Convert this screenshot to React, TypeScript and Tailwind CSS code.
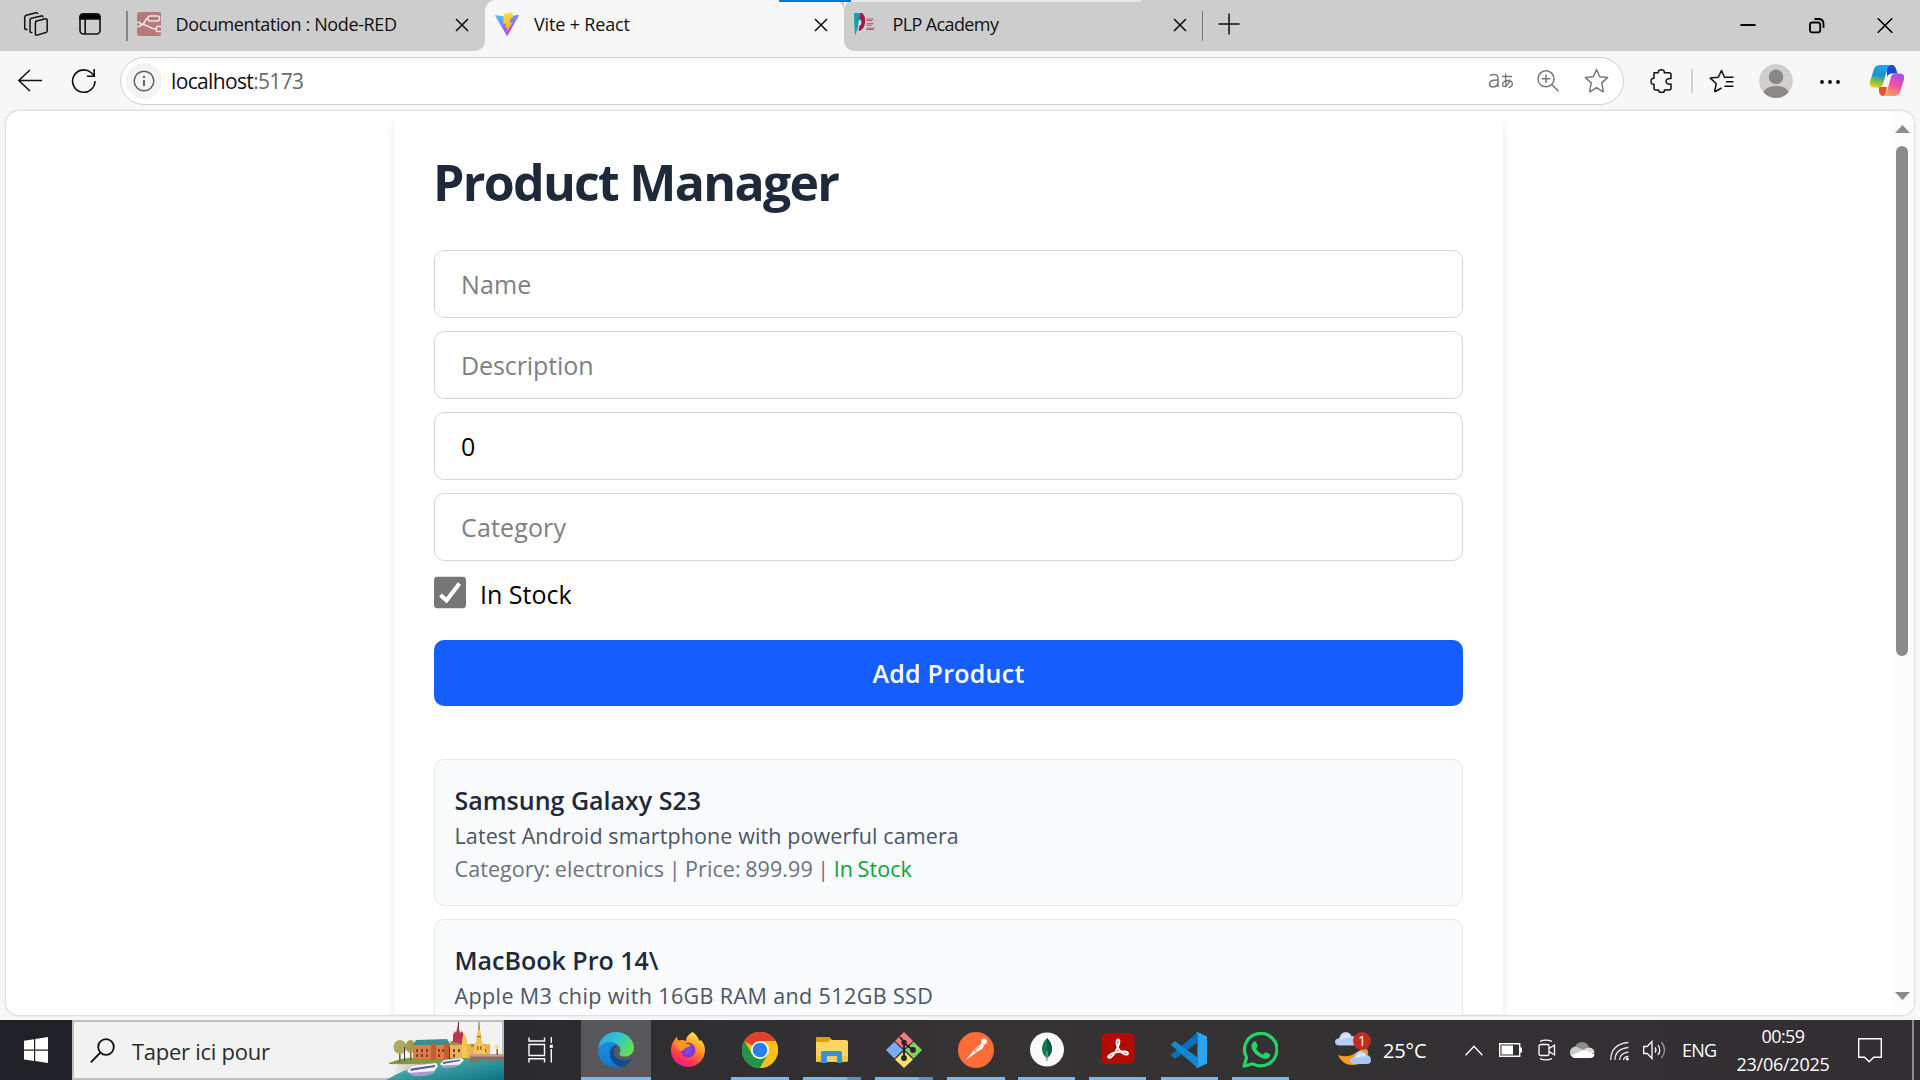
import type { ReactNode } from "react";

const products = [
  {
    name: "Samsung Galaxy S23",
    description: "Latest Android smartphone with powerful camera",
    category: "electronics",
    price: "899.99",
    tracking: "tracking-[0.005em]",
  },
  {
    name: "MacBook Pro 14\\",
    description: "Apple M3 chip with 16GB RAM and 512GB SSD",
    tracking: "tracking-[0.018em]",
  },
];

/* ---------- browser chrome ---------- */

function CloseX({ className = "" }: { className?: string }) {
  return (
    <svg viewBox="0 0 14 14" className={`h-[14px] w-[14px] shrink-0 ${className}`} fill="none" stroke="#111" strokeWidth="1.6">
      <path d="M1 1l12 12M13 1L1 13" />
    </svg>
  );
}

function TabBar() {
  return (
    <div className="relative flex h-[51px] shrink-0 bg-[#cdcdcd] text-[18px] text-[#111]">
      <div className="flex w-[485px] items-center bg-[#f7f7f7]">
        <div className="flex h-full w-full items-center rounded-br-[10px] bg-[#cdcdcd] pb-[3px]">
          <svg viewBox="0 0 26 26" className="ml-[23px] h-[26px] w-[26px]" fill="none" stroke="#111" strokeWidth="1.5" strokeLinejoin="round" strokeLinecap="round">
            <path d="M12.6 10.2 22.6 7.8q1.6-.3 1.6 1.4v10.5q0 1.4-1.4 1.8l-8.6 2.6q-1.8.5-1.8-1.4V12q0-1.5 1.4-1.8z" />
            <path d="M8.8 21.4q-1.8.3-1.8-1.4V9.2q0-1.5 1.5-1.9l9.8-2.4q1.3-.2 1.6.8" />
            <path d="M4 18.6q-2.3 0-2.3-1.9V6.2q0-1.6 1.6-2L13 1.7q1.2-.2 1.7.8" />
          </svg>
          <svg viewBox="0 0 22 22" className="ml-[30px] h-[22px] w-[22px]" fill="none" stroke="#111" strokeWidth="1.6">
            <rect x="1" y="1" width="20" height="20" rx="3.5" />
            <path d="M1 6V4q0-3 3-3h14q3 0 3 3v2z" fill="#000" />
            <path d="M6.2 6v15" />
          </svg>
          <div className="ml-[25px] h-[30px] w-[1.5px] translate-y-[2px] bg-[#858585]" />
          <svg viewBox="0 0 24 24" className="ml-[9.5px] h-6 w-6" fill="none" stroke="#f3e4e4" strokeWidth="1.5">
            <rect width="24" height="24" rx="2" fill="#b67a7a" stroke="none" />
            <rect x="11" y="4" width="11.5" height="5" rx="2" />
            <path d="M0 10.5h2.500q1 0 1 1v2q0 1-1 1H0M4 12.500c5 0 3-6 7-6M4 12.500c8 0 8 4.500 15 4.500M24 14.500h-3.500q-1.200 0-1.200 1v3q0 1 1.200 1H24" />
          </svg>
          <span className="ml-[14.500px] w-[275px] -translate-y-[0.500px] tracking-[-0.021em]">Documentation : Node-RED</span>
          <CloseX className="ml-[4.500px] translate-y-[1px]" />
        </div>
      </div>
      <div className="w-[359px] bg-[#cdcdcd]">
        <div className="flex h-full items-center rounded-t-[11px] bg-[#f7f7f7] pb-[3px]">
          <svg viewBox="0 0 24 24" className="ml-[10px] h-6 w-6">
            <defs>
              <linearGradient id="viteA" x1="0" y1="0" x2=".6" y2="1">
                <stop offset="0" stopColor="#41d1ff" />
                <stop offset="1" stopColor="#bd34fe" />
              </linearGradient>
              <linearGradient id="viteB" x1=".3" y1="0" x2=".5" y2="1">
                <stop offset="0" stopColor="#ffe04b" />
                <stop offset="1" stopColor="#ffa800" />
              </linearGradient>
            </defs>
            <path d="M.3 3 12 5l11.700-2.200q.5 0 .2.600L12.500 23.600q-.4.500-.8 0L0 3.500Q0 3 .3 3z" fill="url(#viteA)" />
            <path d="m17.300.3-8.500 1.500-.6 10.200 3-.7-1 4.600 2.300-.6-1.200 6 6-11-3 .6 1.800-5.300 2-.4z" fill="url(#viteB)" />
          </svg>
          <span className="ml-[15px] w-[273px] -translate-y-[0.500px] tracking-[-0.009em]">Vite + React</span>
          <CloseX className="ml-[7px] translate-y-[1px]" />
        </div>
      </div>
      <div className="flex-1 bg-[#f7f7f7]">
        <div className="flex h-full items-center rounded-l-[10px] bg-[#cdcdcd] pb-[3px]">
          <svg viewBox="0 0 22 24" className="ml-[10px] h-6 w-[22px]">
            <path d="M0 1h9L6 6l2 5-3 1-3.800 11.500L.3 13z" fill="#12a0a5" />
            <path d="M7 1c6 1 6 17-2.500 18l1-5c3-2 3-6-.5-8z" fill="#a5164f" />
            <path d="M5 8q3 0 1.500 4L4 14z" fill="#e8e8e8" />
            <path d="M12.500 7h7M12.500 8.600h6M12.500 11.700h7M12.500 13.300h5M12.500 16.200h8M12.500 17.600h7" stroke="#b8386b" strokeWidth=".9" />
          </svg>
          <span className="ml-[16.500px] w-[273.500px] -translate-y-[0.500px] tracking-[-0.034em]">PLP Academy</span>
          <CloseX className="ml-[6.500px] translate-y-[1px]" />
          <div className="ml-[15px] h-[30px] w-[1.5px] translate-y-[2px] bg-[#777]" />
          <svg viewBox="0 0 22 22" className="ml-[15px] h-[22px] w-[22px]" stroke="#111" strokeWidth="1.5">
            <path d="M11 .5v21M.5 11h21" />
          </svg>
          <div className="ml-auto flex translate-y-[1.500px] items-center">
            <svg viewBox="0 0 16 16" className="h-4 w-4" stroke="#000" strokeWidth="2">
              <path d="M.5 7.500h15" />
            </svg>
            <svg viewBox="0 0 16 16" className="ml-[53px] h-4 w-4" fill="none" stroke="#000" strokeWidth="1.800">
              <rect x="1" y="5" width="10.200" height="10" rx="2.200" />
              <path d="M5.500 1.500h4q5 0 5 5v4" />
            </svg>
            <svg viewBox="0 0 16 16" className="mr-[27px] ml-[52px] h-4 w-4" stroke="#000" strokeWidth="1.600">
              <path d="M.7.7l14.600 14.600M15.300.7.7 15.300" />
            </svg>
          </div>
        </div>
      </div>
      <div className="absolute top-0 left-[779px] flex h-[2px]">
        <div className="h-[2px] w-[72px] shrink-0 bg-[#0078d7]" />
        <div className="h-[2px] w-[290px] shrink-0 bg-[#e6e6e6]" />
      </div>
    </div>
  );
}

const STAR = "M12 1.400l3.100 7 7.600.8-5.700 5.100 1.600 7.900q.1.900-.7.500L12 18.900l-5.900 3.800q-.8.400-.7-.5L7 14.300 1.300 9.200l7.600-.8z";

function Toolbar() {
  return (
    <div className="flex h-[59px] shrink-0 items-center bg-[#f7f7f7]">
      <svg viewBox="0 0 26 24" className="ml-[17px] h-6 w-[26px] -translate-y-[0.500px]" fill="none" stroke="#111" strokeWidth="1.500">
        <path d="M13 1.500 1.800 12 13 22.500M1.800 12H25" />
      </svg>
      <svg viewBox="0 0 26 26" className="ml-[28px] h-[26px] w-[26px]" fill="none" stroke="#111" strokeWidth="1.600">
        <path d="M24 13A11.200 11.200 0 1 1 20 4.500l3 3M23.200 1v7.200H16" />
      </svg>
      <div className="ml-[23px] flex h-[48px] w-[1504px] items-center rounded-full border-[1.5px] border-[#d0d0d0] bg-white">
        <div className="ml-[5px] flex h-9 w-9 items-center justify-center rounded-full bg-[#f3f3f3]">
          <svg viewBox="0 0 22 22" className="h-[22px] w-[22px]" fill="none" stroke="#5f5f5f" strokeWidth="1.400">
            <circle cx="11" cy="11" r="9.800" />
            <path d="M11 10v6M11 6v2" strokeWidth="1.900" />
          </svg>
        </div>
        <span className="ml-[9px] translate-y-[1px] text-[21px] tracking-[-0.031em] text-[#111]">
          localhost<span className="text-[#6b6b6b]">:5173</span>
        </span>
        <svg viewBox="0 0 26 18" className="mr-[23px] ml-auto h-[18px] w-[26px]" fill="none" stroke="#777" strokeWidth="1.500">
          <path d="M2 3.800q1.500-1.300 4-1.300 4 0 4 4V15M10 8q-8.500-.4-8.500 4 0 3 3.200 3 4.300 0 5.300-4" />
          <path d="M14 4.500h10M17.800 1.500q-.6 9 .6 13.500M22 7.500q-2 6.500-5.500 7-2.500 0-1.800-2.800 1-3 5.300-3.200 4.700 0 4.300 3.800-.5 2.700-3.800 3.200" strokeWidth="1.300" />
        </svg>
        <svg viewBox="0 0 22 22" className="mr-[25px] h-[22px] w-[22px]" fill="none" stroke="#777" strokeWidth="1.500">
          <circle cx="9" cy="8.800" r="8" />
          <path d="M9 4.500v8.600M4.700 8.800h8.600M14.700 14.500l6.800 6.800" />
        </svg>
        <svg viewBox="0 0 24 24" className="mr-[14.500px] h-[25px] w-[25px]" fill="none" stroke="#777" strokeWidth="1.400" strokeLinejoin="round">
          <path d={STAR} />
        </svg>
      </div>
      <svg viewBox="0 0 23 24" className="ml-[26px] h-6 w-[23px]" fill="none" stroke="#111" strokeWidth="1.500" strokeLinejoin="round">
        <path d="M4 3.800h4.300q-.4-3 3-3t3 3H19q2 0 2 2v3.700q-5-.3-5 2.800t5 2.800v4q0 2-2 2h-4.600q.4 2.400-2.700 2.400T8.500 21H6q-2 0-2-2v-3.700q-3 .3-3-2.900T4 9.300z" />
      </svg>
      <div className="ml-[18px] h-6 w-[1.500px] bg-[#cfcfcf]" />
      <svg viewBox="0 0 25 24" className="ml-[16px] h-6 w-[25px]" fill="none" stroke="#111" strokeWidth="1.500" strokeLinejoin="round">
        <path d="M15.500 8.300 12.500 1.500 9.300 8.300l-8 .8 6 5.600L5.700 22q0 .8.700.5l6.100-3.500" />
        <path d="M15 8.300h9.500M17 12.800h7.500M15.500 17.300h9" />
      </svg>
      <svg viewBox="0 0 34 34" className="ml-[25px] h-[34px] w-[34px]">
        <defs>
          <clipPath id="avatar"><circle cx="17" cy="17" r="17" /></clipPath>
        </defs>
        <g clipPath="url(#avatar)">
          <circle cx="17" cy="17" r="17" fill="#d2d0ce" />
          <circle cx="17" cy="12.800" r="7.300" fill="#8a8886" />
          <path d="M4 29q3-7 13-7t13 7l-4 5H8z" fill="#8a8886" />
        </g>
      </svg>
      <svg viewBox="0 0 22 6" className="ml-[26.500px] h-[6px] w-[22px] translate-y-[1px]" fill="#000">
        <circle cx="3" cy="3" r="1.900" /><circle cx="11" cy="3" r="1.900" /><circle cx="19" cy="3" r="1.900" />
      </svg>
      <svg viewBox="0 0 34 31" className="ml-[28.500px] h-[31px] w-[34px]">
        <defs>
          <linearGradient id="cpA" x1=".5" y1="0" x2=".3" y2="1">
            <stop offset="0" stopColor="#1aa7ee" /><stop offset=".45" stopColor="#218fd0" /><stop offset=".7" stopColor="#6fbd55" /><stop offset="1" stopColor="#f2cf12" />
          </linearGradient>
          <linearGradient id="cpB" x1=".7" y1="0" x2=".3" y2="1">
            <stop offset="0" stopColor="#a44df0" /><stop offset=".5" stopColor="#f0549b" /><stop offset="1" stopColor="#ffa25a" />
          </linearGradient>
        </defs>
        <path d="M17 0h5q3 0 4 4l1.500 4.500H22q-4 0-5 3.500z" fill="#1b49cf" />
        <path d="M9 22h8l-1 5q-1 4-2.500 4Q10 31 9 27z" fill="#ee5130" />
        <path d="M10 0h11q-3 1-4 5l-4 14q-1 3.500-5 3.500H4q-5 0-4-6L4 4q1.500-4 6-4z" fill="url(#cpA)" />
        <path d="M24 31H13q3-1 4-5l4-14q1-3.500 5-3.500h4q5 0 4 6L30 27q-1.500 4-6 4z" fill="url(#cpB)" />
      </svg>
    </div>
  );
}

/* ---------- page ---------- */

const field =
  "block h-[68px] w-full rounded-[10px] border border-[#d1d5dc] bg-white pr-[27px] pl-[26px] text-[25px] text-black placeholder:text-[#808080] placeholder:opacity-100 outline-none";

function Page() {
  return (
    <div className="mx-[6px] flex h-[904px] shrink-0 overflow-hidden rounded-[13px] bg-white shadow-[0_0_2px_1px_rgba(0,0,0,0.13)]">
      <div className="flex flex-1 justify-center">
        <main className="h-[903px] w-[1109px] shrink-0 rounded-t-[14px] bg-white px-[40px] pt-[41px] shadow-[0_5px_9px_1px_rgba(0,0,0,0.08)]">
          <h1 className="mb-[38px] h-[60px] text-[50px] leading-[60px] font-bold tracking-[-0.034em] whitespace-nowrap text-[#1e2939]">
            <span className="-ml-[1px]">Product Manager</span>
          </h1>
          <form>
            <div className="flex flex-col gap-[13px]">
              <input className={`${field} tracking-[0.004em]`} placeholder="Name" />
              <input className={`${field} tracking-[-0.004em]`} placeholder="Description" />
              <input className={field} defaultValue="0" />
              <input className={`${field} tracking-[0.006em]`} placeholder="Category" />
            </div>
            <label className="mt-[13px] flex h-[38px] items-center text-[25px] text-black">
              <svg viewBox="0 0 32 32" className="mr-[14px] h-[32px] w-[32px] -translate-y-[0.500px]">
                <rect width="32" height="32" rx="4" fill="#767676" />
                <path d="M6.500 18.500l6 5.500L25.500 7" fill="none" stroke="#fff" strokeWidth="4.200" />
              </svg>
              <span className="translate-y-[2px]">In Stock</span>
            </label>
            <button type="button" className="mt-[28px] h-[66px] w-full rounded-[10px] bg-[#155dfc] pt-[2px] text-[25px] font-semibold tracking-[0.010em] text-white">
              Add Product
            </button>
          </form>
          <ul className="mt-[53px] flex flex-col gap-[13px]">
            {products.map((p) => (
              <li key={p.name} className="h-[147px] rounded-[10px] border border-[#e5e7eb] bg-[#f9fafc] pt-[22px] pl-[19.500px] whitespace-nowrap">
                <h2 className="text-[25px] leading-[37px] font-semibold text-[#1e2939]">{p.name}</h2>
                <p className={`text-[21.500px] leading-[33px] text-[#4a5565] ${p.tracking}`}>{p.description}</p>
                {p.price && (
                  <p className="text-[21.500px] leading-[33px] tracking-[0.004em] [word-spacing:-0.055em] text-[#6a7282]">
                    Category: {p.category} | Price: {p.price} | <span className="text-[#00a63e]">In Stock</span>
                  </p>
                )}
              </li>
            ))}
          </ul>
        </main>
      </div>
      <div className="flex w-[23px] flex-col items-center bg-[#fcfcfc] pr-[1px]">
        <svg viewBox="0 0 15 8" className="mt-[14px] h-2 w-[15px]" fill="#8b8b8b"><path d="M7.500 0 15 8H0z" /></svg>
        <div className="mt-[13px] h-[510px] w-[12px] rounded-full bg-[#8b8b8b]" />
        <svg viewBox="0 0 15 8" className="mt-auto mb-[15px] h-2 w-[15px]" fill="#8b8b8b"><path d="M7.500 8 15 0H0z" /></svg>
      </div>
    </div>
  );
}

/* ---------- taskbar ---------- */

function CityArt() {
  return (
    <svg viewBox="0 0 118 58" className="ml-auto h-[58px] w-[118px] shrink-0">
      <defs>
        <linearGradient id="water" x1="0" y1="0" x2="1" y2="1">
          <stop offset="0" stopColor="#83b8b5" /><stop offset=".45" stopColor="#3f9fa6" /><stop offset="1" stopColor="#0c7480" />
        </linearGradient>
        <linearGradient id="bank" x1="0" x2="1">
          <stop offset="0" stopColor="#f2f2f2" /><stop offset=".3" stopColor="#c3a7a2" /><stop offset="1" stopColor="#a08080" />
        </linearGradient>
      </defs>
      <path d="M12 40h106v18H6z" fill="url(#bank)" />
      <path d="M0 58Q18 47 38 43q34-8 56-10l24 4v21z" fill="url(#water)" />
      <path d="M3 41q14-6 30-5l55-3-2 3q-32 7-83 6z" fill="#7b9b3d" />
      <path d="M13 28h1.600v12H13zM24 28h1.500v10H24z" fill="#7d6232" />
      <ellipse cx="14" cy="25" rx="6.500" ry="7" fill="#b0ab5c" />
      <ellipse cx="24.500" cy="24.500" rx="5" ry="6.500" fill="#a39d50" />
      <path d="M27 23h36v14H27z" fill="#df7c43" />
      <path d="M27 23l3-5 31-1 4 6z" fill="#3d8d90" />
      <path d="M45 22h5v16h-5zM58 22h6v15h-6z" fill="#c65c36" />
      <path d="M64 22h40v14H64z" fill="#e9b54d" />
      <path d="M63 23l2-4h16v4zM85 22h14v3H85z" fill="#9c8a55" />
      <path d="M30 27h2v3h-2zM35 27h2v3h-2zM40 27h2v3h-2zM52 27h2v3h-2zM56 27h2v3h-2zM30 32h2v3h-2zM35 32h2v3h-2zM40 32h2v3h-2zM52 32h2v3h-2zM67 27h2v3h-2zM72 27h2v3h-2zM90 27h2v3h-2zM98 27h2v3h-2zM67 32h2v3h-2z" fill="#7d3f38" />
      <path d="M67 20v-7l2-4 1 2 2-9 2 9 2-2 2 4v9z" fill="#bb3550" />
      <path d="M72 0h1v6h-1z" fill="#7c294b" />
      <path d="M76 36V18l2-8 3 8v18zM88 36V23l2-3 1-8 2-10 2 10 1 8 3 4v12z" fill="#f0c657" />
      <path d="M92.600 0h.9v8h-.9z" fill="#8c4a56" />
      <path d="M91 24h1.500v4H91zM94 24h1.500v4H94zM91 14h4v1.200h-4z" fill="#a4692e" />
      <path d="M84 33h34v6q-6-2-10 0h-4q-7-3-12 1h-8z" fill="#8f6d67" />
      <path d="M84 32h34v2.500H84z" fill="#c1a18d" />
      <path d="M110.500 25h1.500v8h-1.500z" fill="#7a5b4b" /><circle cx="111.300" cy="25" r="2.300" fill="#f6e08a" />
      <path d="M18 25h1v14h-1zM63 25h1v14h-1z" fill="#3a3545" />
      <path d="M21 49l5-5 24-3 2 3-5 7q-12 4-22 1z" fill="#f6f5fa" />
      <path d="M25 46.500l24-3.500v2l-25 4z" fill="#4d62a6" />
      <path d="M22 51l26-2-2 3q-12 4-21 1z" fill="#a99fc2" />
      <path d="M54 42l4-4 17-2 3 2-5 5q-10 4-17 1z" fill="#f6f5fa" />
      <path d="M57 40l17-2.500v1.500l-17 3z" fill="#4d62a6" />
      <path d="M55 43.500l18-1-3 2q-8 2-13 1z" fill="#a99fc2" />
    </svg>
  );
}

function EdgeIcon() {
  return (
    <svg viewBox="0 0 36 36" className="h-9 w-9">
      <defs>
        <linearGradient id="edA" x1="0" y1=".2" x2="1" y2=".6"><stop offset="0" stopColor="#2aa5e8" /><stop offset=".5" stopColor="#32c4cf" /><stop offset="1" stopColor="#67e04d" /></linearGradient>
        <linearGradient id="edB" x1="0" y1="0" x2=".6" y2="1"><stop offset="0" stopColor="#1a8fe0" /><stop offset="1" stopColor="#1276d0" /></linearGradient>
      </defs>
      <path d="M0 17C1 7 8 0 18 0c11 0 18 8 18 16 0 6-5 8.500-9 8.500-4.500 0-6-2-5.500-3 1.500-2 1.300-6-1.500-8C15 9 4 9 0 17z" fill="url(#edA)" />
      <path d="M0 18C3 10 14 8 20 13c-5-1-8 4-7.500 9.500C13 29 18 34 23 35.300 10 38-.5 28 0 18z" fill="url(#edB)" />
      <path d="M20 13c-7 0-10 7-7 14 3 6 9 9 12 7.500 4-1.500 7-4 8.500-7 .3-.8-.2-1-1-.6-7 3.300-17 .1-17-7 0-3.500 2-6 4.500-6.900z" fill="#104b94" />
    </svg>
  );
}

function FirefoxIcon() {
  return (
    <svg viewBox="0 0 36 36" className="h-9 w-9">
      <defs>
        <linearGradient id="ffA" x1=".8" y1="0" x2=".3" y2="1"><stop offset="0" stopColor="#fff04a" /><stop offset=".4" stopColor="#ff9b24" /><stop offset=".75" stopColor="#ff3a50" /><stop offset="1" stopColor="#e5168c" /></linearGradient>
        <radialGradient id="ffB"><stop offset="0" stopColor="#7a4df2" /><stop offset="1" stopColor="#8b2fc0" /></radialGradient>
      </defs>
      <path d="M22.500 0c5 3 6 7 7 9 1-.5 1-1 1-1.500C34 11 35 15 35 18c0 10-8 17-17 17S1 28 1 18.500C1 12 4 8 7 4.500c0 2 .5 3 1.500 4 3-1 5-.5 7.500.5 0-4 3-7 6.500-9z" fill="url(#ffA)" />
      <circle cx="18" cy="18" r="7.500" fill="url(#ffB)" />
      <path d="M5 12c4-3 9-2 12 0 2 0 3.500.5 3.500 1.500S17 15.500 15 16c-1 3-4 1.500-4 4-2-3-4-6-6-8z" fill="#ff9426" />
    </svg>
  );
}

function ChromeIcon() {
  return (
    <svg viewBox="0 0 36 36" className="h-9 w-9">
      <circle cx="18" cy="18" r="18" fill="#f9bb0d" />
      <path d="M18 18 2.400 9A18 18 0 0 1 33.600 9z" fill="#e03e30" />
      <path d="M18 18 10.200 22.500 2.400 9a18 18 0 0 0 15.600 27l7.800-13.500z" fill="#1f9547" />
      <path d="M18 9h15.600A18 18 0 0 1 18 36l7.800-13.500z" fill="#fcc012" />
      <circle cx="18" cy="18" r="9" fill="#fff" />
      <circle cx="18" cy="18" r="7.300" fill="#2b7cee" />
    </svg>
  );
}

function FolderIcon() {
  return (
    <svg viewBox="0 0 36 36" className="h-9 w-9">
      <path d="M2 7q0-2 2-2h11l3 3h14q2 0 2 2v18q0 2-2 2H2z" fill="#ffd562" />
      <path d="M2 7q0-2 2-2h11l2 2-3 3H2z" fill="#e09f08" />
      <path d="M2 24h32v4q0 2-2 2H2z" fill="#f6c444" />
      <path d="M7 31V21q0-2 2-2h17q2 0 2 2v10h-5v-7H13v7z" fill="#3492dc" />
      <path d="M13 24h10v6H13z" fill="#f9cd57" />
    </svg>
  );
}

function GitIcon() {
  return (
    <svg viewBox="0 0 36 36" className="h-9 w-9">
      <path d="M18 0 27 9l-9 8-9-8z" fill="#f87b7d" />
      <path d="M8.300 9.700 17 18l-8.700 8.500L0 18z" fill="#7cabf5" />
      <path d="M27.700 9.700 36 18l-8.300 8.500L19 18z" fill="#85cf65" />
      <path d="m18 19 9 8.500-9 8.500-9-8.500z" fill="#f7e071" />
      <path d="M14 5l4 5v15M18 11l9 7" fill="none" stroke="#28262a" strokeWidth="2" />
      <circle cx="18" cy="10.500" r="2.700" fill="#28262a" /><circle cx="27" cy="18" r="2.900" fill="#28262a" /><circle cx="18" cy="26" r="2.900" fill="#28262a" />
    </svg>
  );
}

function PostmanIcon() {
  return (
    <svg viewBox="0 0 36 36" className="h-9 w-9">
      <circle cx="18" cy="18" r="18" fill="#ff6c37" />
      <circle cx="26" cy="9.500" r="2.900" fill="#fff" />
      <path d="M23.500 11.500 15 18.500l-2.500 4-5 5.500 6-4 4-3 7-4.500 1.800-3.500z" fill="#fff" />
      <path d="M16 17l2 3M14.500 20l8-6" stroke="#ff6c37" strokeWidth=".9" />
    </svg>
  );
}

function MongoIcon() {
  return (
    <svg viewBox="0 0 36 36" className="h-9 w-9">
      <circle cx="18" cy="17.500" r="17" fill="#fafafa" />
      <path d="M18 6q5 5 5 11 0 5-4.500 8.500L18.300 29h-.7l-.3-3.500Q13 22 13 17q0-6 5-11z" fill="#117a4f" />
      <path d="M18 6q5 5 5 11 0 5-4.500 8.500z" fill="#0a5c44" />
      <path d="M17.700 19h.7v10h-.7z" fill="#b9cdb9" />
    </svg>
  );
}

function AcrobatIcon() {
  return (
    <svg viewBox="0 0 36 36" className="h-9 w-9">
      <rect x="1.500" y="1" width="33" height="31" rx="5" fill="#b30b00" />
      <path d="M18 7.500c2.300 0 1.500 4-.5 8.300C15 21 11.500 26 9 25.800c-2.500-.8 1-4.300 7-5.600 6-1.200 12-1 12 1.300 0 2.200-5 1-8.500-3.200C16 14 15.700 7.500 18 7.500z" fill="none" stroke="#fff" strokeWidth="1.900" />
    </svg>
  );
}

function CodeIcon() {
  return (
    <svg viewBox="0 0 36 36" className="h-9 w-9">
      <path d="M26.500.3v10.200L4 27 .4 24q-.6-.7 0-1.500z" fill="#0072b8" />
      <path d="M26.500 35.700V25.500L4 9 .4 12q-.6.700 0 1.500z" fill="#1088d2" />
      <path d="M26.500 0 36 4.500v27L26.500 36q-1 0-1.700-1 1.700.3 1.700-1.500v-31Q26.500.8 24.800 1z" fill="#28a5f2" />
    </svg>
  );
}

function WhatsappIcon() {
  return (
    <svg viewBox="0 0 36 36" className="h-9 w-9">
      <path d="M2 34.200 4.600 25.500A16.200 16.200 0 1 1 11 31.800z" fill="none" stroke="#25d366" strokeWidth="3.200" strokeLinejoin="round" />
      <path d="M12 9.500q1-.6 1.800 0l2 4.200q.2.800-1.600 2.800 2.200 4.500 7 6 2.200-2.600 2.900-2.300l4 2q.8 2.200-1.400 3.900-3.500 2.300-9-1-7-4.200-8.200-9.600-.7-4 2.500-6z" fill="#25d366" />
    </svg>
  );
}

const apps: { icon: ReactNode; cell: string; bar: string; extra?: boolean }[] = [
  { icon: <EdgeIcon />, cell: "w-[70px] bg-[#58585c]", bar: "w-[70px]" },
  { icon: <FirefoxIcon />, cell: "w-[74px]", bar: "w-0" },
  { icon: <ChromeIcon />, cell: "w-[70px]", bar: "w-[58px]" },
  { icon: <FolderIcon />, cell: "w-[74px]", bar: "w-[44px]", extra: true },
  { icon: <GitIcon />, cell: "w-[70px]", bar: "w-[44px]", extra: true },
  { icon: <PostmanIcon />, cell: "w-[73px]", bar: "w-[58px]" },
  { icon: <MongoIcon />, cell: "w-[69px]", bar: "w-[57px]" },
  { icon: <AcrobatIcon />, cell: "w-[73px]", bar: "w-[57px]" },
  { icon: <CodeIcon />, cell: "w-[70px]", bar: "w-[57px]" },
  { icon: <WhatsappIcon />, cell: "w-[72px]", bar: "w-[57px]" },
];

function WeatherIcon() {
  return (
    <div className="relative ml-[39px] h-9 w-9">
      <svg viewBox="0 0 36 36" className="h-9 w-9">
        <path d="M3 23q9 3 16-1 6-4 11-7 5 4 2 10-4 8-14 8Q7 33 3 23z" fill="#f59a23" />
        <path d="M4 13.500q-4-.5-4-3.800 0-3 4-3.500Q6 0 10.500 0 15 0 16.500 4 22 4 22 9q0 4.500-4 4.500z" fill="#b9cdf3" />
        <path d="M5 8q1-6 6-6.500Q15 2 16 6q-6-1-11 2z" fill="#dbe6fb" />
        <path d="M18 32q-3-.5-3-3.500t4-3.500q2-6 7-6 4.500 0 5.500 4Q36 23.500 36 28q0 4-4 4z" fill="#adc5f2" />
        <path d="M20 27q1-6 6-6.500 4 0 5 4-6-1-11 2.500z" fill="#d9e5fb" />
      </svg>
      <div className="absolute top-0 left-[18px] flex h-[18px] w-[18px] items-center justify-center rounded-full bg-[#c42b1c] text-[14px] leading-none text-white">1</div>
    </div>
  );
}

function Taskbar() {
  return (
    <div className="flex h-[60px] shrink-0 items-center bg-linear-to-r from-[#202127] via-[#353334] to-[#322e32] text-white">
      <svg viewBox="0 0 24 26" className="mr-[24px] ml-[24px] h-[26px] w-6" fill="#fff">
        <path d="M0 3.800 10 2.200v10.300H0zM11.200 2 24 0v12.500H11.200zM0 13.700h10v10.200L0 22.400zM11.200 13.700H24V26l-12.800-1.900z" />
      </svg>
      <div className="flex h-[60px] w-[432px] items-center border-2 border-[#bfbfbf] bg-[#f2f2f2] text-[#2b2b2b]">
        <svg viewBox="0 0 25 25" className="ml-[16px] h-[25px] w-[25px]" fill="none" stroke="#111" strokeWidth="1.800">
          <circle cx="16" cy="9" r="7.800" />
          <path d="M10.500 14.500.8 24.300" />
        </svg>
        <span className="ml-[17px] translate-y-[0.500px] text-[22px] tracking-[-0.012em] whitespace-nowrap">Taper ici pour</span>
        <div className="-mr-[2px] ml-auto h-[58px] translate-y-[1px]">
          <CityArt />
        </div>
      </div>
      <svg viewBox="0 0 25 26" className="mr-[28px] ml-[24px] h-[26px] w-[25px]" fill="none" stroke="#fff" strokeWidth="1.400">
        <path d="M1 .5v3.500h15.500V.5M1 7.500h15.500v11H1zM1 25.500v-3.700h15.500v3.700M23.300 0v6M23.300 12v13.500" />
        <path d="M21.800 7.700h3v3.200h-3z" fill="#fff" stroke="none" />
      </svg>
      {apps.map((a, i) => (
        <div key={i} className={`flex h-[60px] flex-col items-center pt-[12px] ${a.cell}`}>
          {a.icon}
          <div className="mt-auto flex h-[3px]">
            <div className={`bg-[#76b9ed] ${a.bar}`} />
            {a.extra && <div className="w-[14px] bg-[#5f8fb5]" />}
          </div>
        </div>
      ))}
      <WeatherIcon />
      <span className="ml-[12px] w-[82px] translate-y-[1px] text-[20px] tracking-[-0.008em]">25°C</span>
      <svg viewBox="0 0 18 11" className="h-[11px] w-[18px]" fill="none" stroke="#fff" strokeWidth="1.400"><path d="M.6 10.300 9 1.300l8.400 9" /></svg>
      <svg viewBox="0 0 23 14" className="ml-[16px] h-[14px] w-[23px]">
        <path d="M.7.7h20v12.600H.7z" fill="none" stroke="#fff" strokeWidth="1.400" />
        <path d="M2.500 2.500h11.500v9H2.500zM21 4.500h2v5h-2z" fill="#fff" />
      </svg>
      <svg viewBox="0 0 18 22" className="ml-[16px] h-[22px] w-[18px]" fill="none" stroke="#fff" strokeWidth="1.300">
        <rect x="1" y="5.500" width="10" height="11" rx="1.500" />
        <path d="M11 9.500l5.500-3.300v9.600L11 12.500M2 2.300q6-2.500 12 0M2 19.700q6 2.500 12 0" />
      </svg>
      <svg viewBox="0 0 25 17" className="ml-[14px] h-[17px] w-[25px]">
        <path d="M5 5q2-5 7-5t7 5l-5 4z" fill="#8d8b8d" />
        <path d="M4.500 15.500Q0 15 0 10.500 0 5 6 4.500l13 6z" fill="#c9c9c9" />
        <path d="M19 5.500q5.500.5 5.500 5.500l-5 0-6-3q2-2.500 5.500-2.500z" fill="#dedede" />
        <path d="M4 16q-2-1-2.500-2.500L13.500 8l11 4q0 4-4.500 4z" fill="#fff" />
      </svg>
      <svg viewBox="0 0 20 20" className="ml-[15px] h-5 w-5 translate-y-[1px]" fill="none" stroke="#fff" strokeWidth="1.300">
        <path d="M.7 19Q1 3 18.500 1.500M5 19Q5 8 18.500 6.500M9.500 19Q10 12 18.500 11" opacity=".85" />
        <path d="M13.500 19q.5-3.500 5-3.700" />
        <circle cx="17.300" cy="18" r="1.500" fill="#fff" stroke="none" />
      </svg>
      <svg viewBox="0 0 23 20" className="ml-[13px] h-5 w-[23px]" fill="none" stroke="#fff" strokeWidth="1.300">
        <path d="M.7 6.500h3.500L9 1.500v17l-4.800-5H.7zM12 7.500q1.800 2.500 0 5M15 5q3.500 5 0 10" />
        <path d="M18.500 2q6 8 0 16" opacity=".5" />
      </svg>
      <span className="ml-[16px] w-[36px] text-[18px] tracking-[-0.04em]">ENG</span>
      <div className="ml-[14px] flex w-[102px] flex-col items-center text-[18px] leading-[28px]">
        <span className="tracking-[-0.03em]">00:59</span>
        <span className="tracking-[-0.014em]">23/06/2025</span>
      </div>
      <svg viewBox="0 0 24 25" className="ml-[24px] h-[25px] w-6" fill="none" stroke="#fff" strokeWidth="1.400">
        <path d="M.7.7h22.600v18.500h-7.500l-4.600 4.600-4.600-4.600H.7z" />
      </svg>
      <div className="mr-[6px] ml-auto h-[60px] w-[2px] bg-[#8d8b8d]" />
    </div>
  );
}

export default function App() {
  return (
    <div className="flex h-[1080px] w-[1920px] flex-col overflow-hidden bg-[#f7f7f7] [font-family:'Open_Sans',sans-serif]">
      <TabBar />
      <Toolbar />
      <div className="flex flex-1 flex-col pt-[1px]">
        <Page />
      </div>
      <Taskbar />
    </div>
  );
}
